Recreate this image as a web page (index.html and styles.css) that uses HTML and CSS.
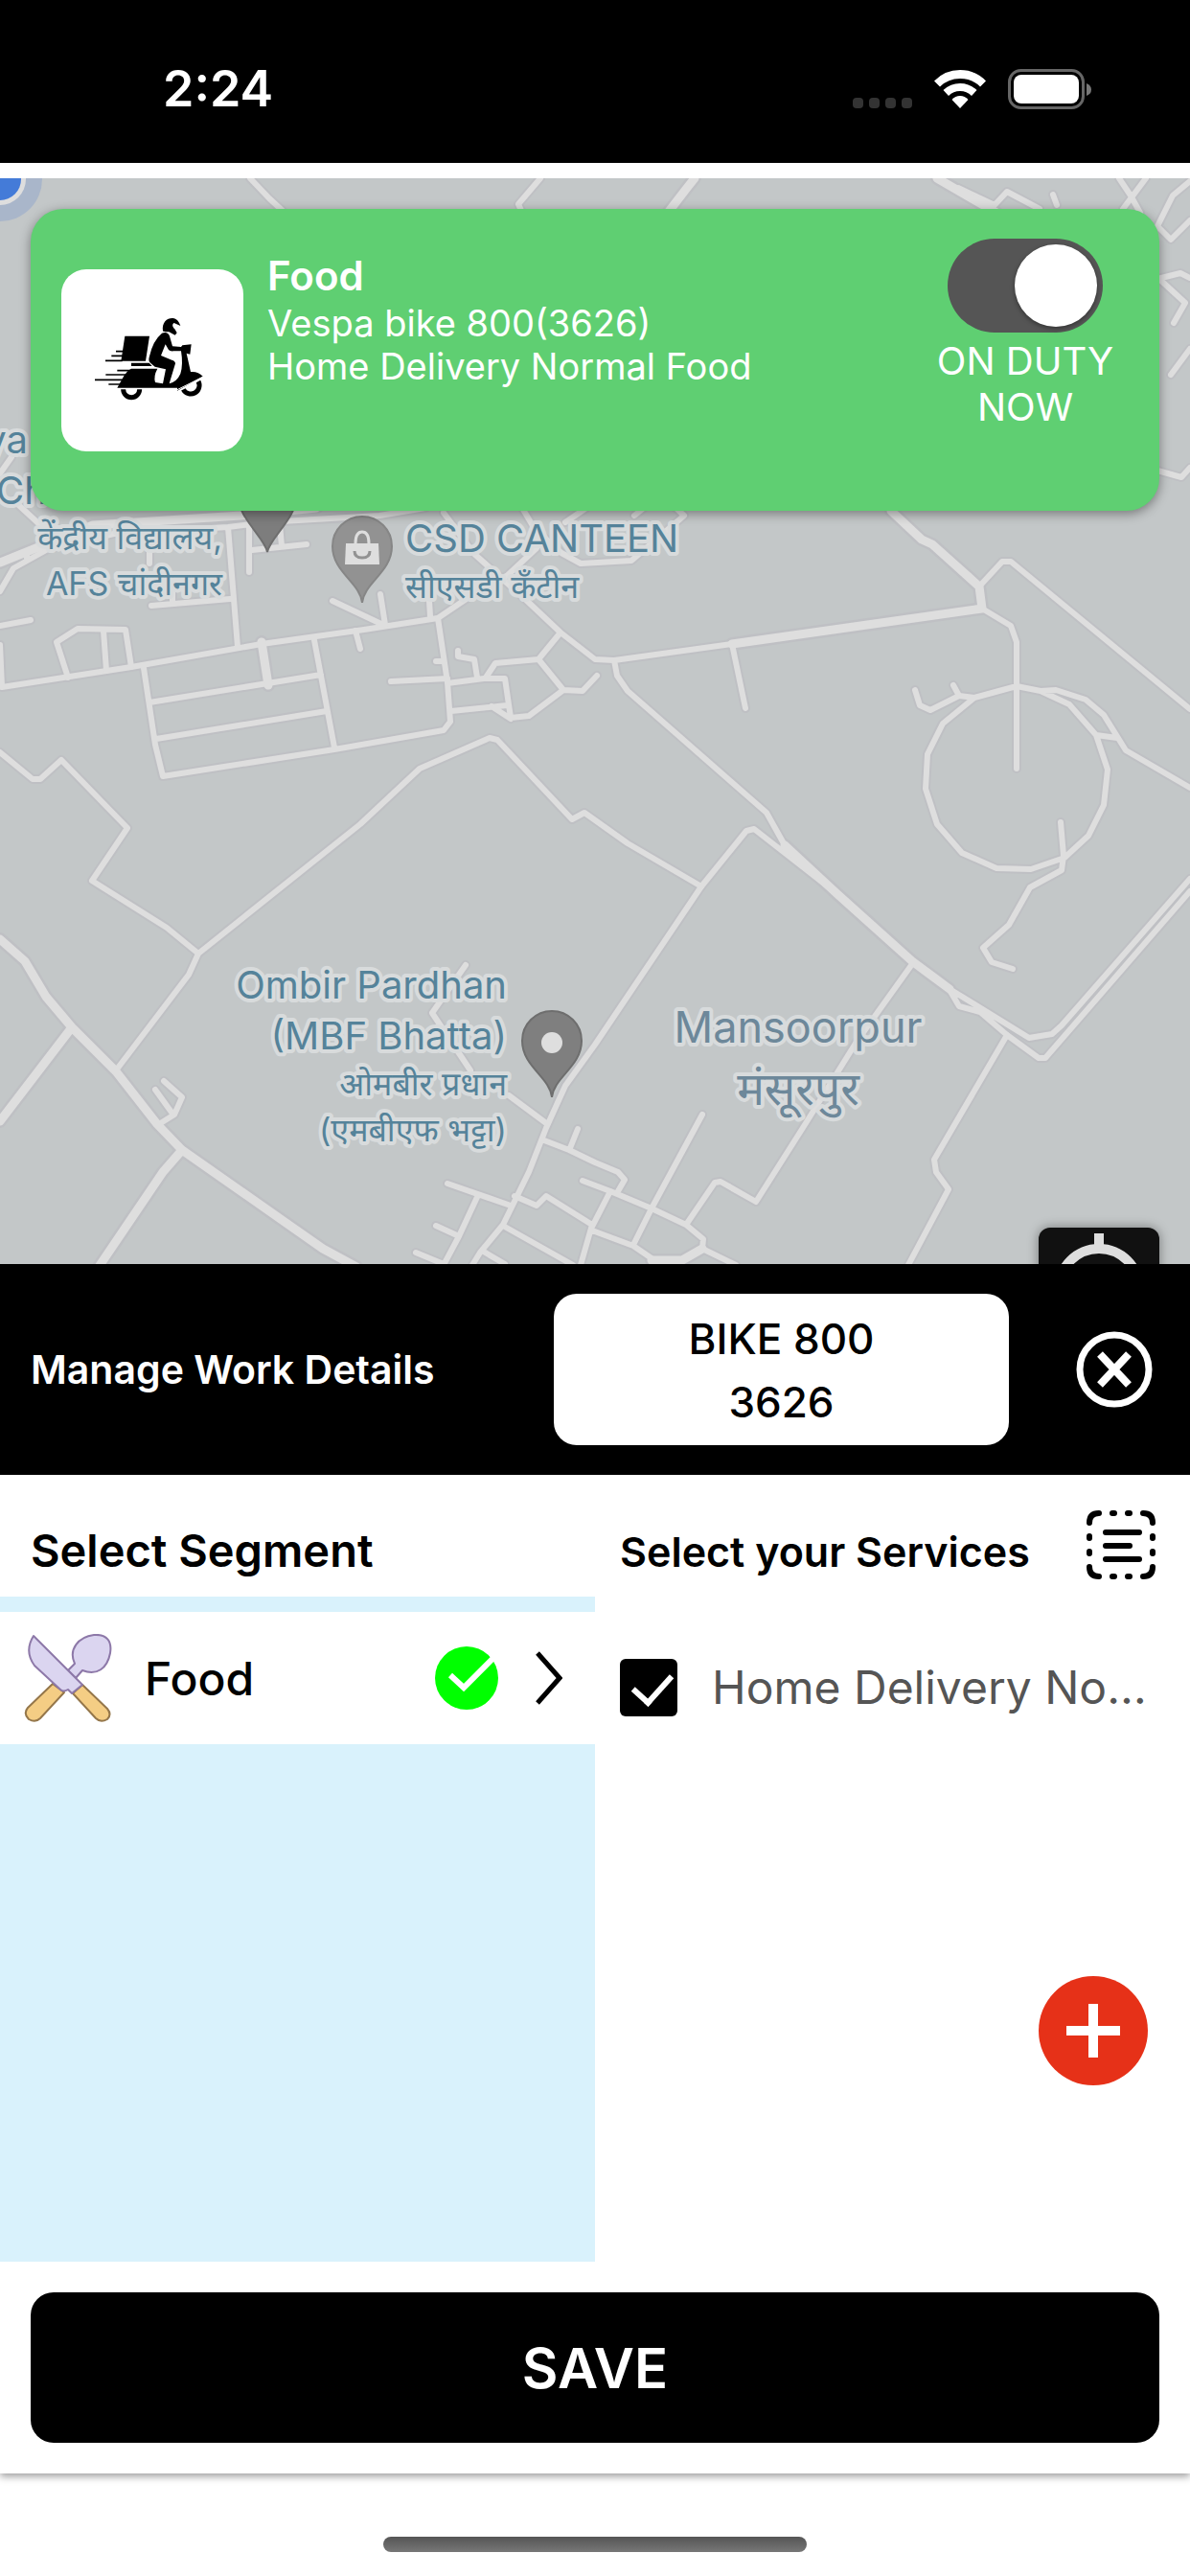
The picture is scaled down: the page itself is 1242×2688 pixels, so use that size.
FILE: index.html
```html
<!DOCTYPE html>
<html lang="en">
<head>
<meta charset="utf-8">
<meta name="viewport" content="width=device-width, initial-scale=1">
<title>Manage Work Details</title>
<link rel="stylesheet" href="styles.css">
</head>
<body>
<div class="screen">
  <header class="status">
    <span class="status-time">2:24</span>
    <div class="status-icons">
      <svg width="62" height="42" viewBox="0 0 62 42" aria-hidden="true"><g fill="#333"><rect x="0" y="30" width="11" height="11" rx="4"/><rect x="17" y="30" width="11" height="11" rx="4"/><rect x="34" y="30" width="11" height="11" rx="4"/><rect x="51" y="30" width="11" height="11" rx="4"/></g></svg>
      <svg width="54" height="42" viewBox="0 0 54 42" aria-hidden="true"><g fill="#fff"><path d="M0 12.500Q11 1 27 1T54 12.500L48 18.500Q39.500 10 27 10T6 18.500Z"/><path d="M9.500 22Q17 15 27 15T44.500 22L39 28Q34 23 27 23T15 28Z"/><path d="M18.500 32Q22 28 27 28T35.500 32L27 41Z"/></g></svg>
      <svg width="88" height="42" viewBox="0 0 88 42" aria-hidden="true"><rect x="1.500" y="1.500" width="77" height="39" rx="12" fill="none" stroke="#666" stroke-width="3"/><rect x="6" y="6" width="68" height="30" rx="8" fill="#fff"/><path d="M82 15Q87 17 87 21.500T82 28Z" fill="#777"/></svg>
    </div>
  </header>

  <section class="map" aria-label="Map">
    <svg class="map-canvas" viewBox="0 186 1242 1133" preserveAspectRatio="xMidYMin slice">
      <defs>
        <g id="roads">
          <path d="M261 186L281 207L295 220M564 186L541 213L545 222M1000 196L1038 214L1051 200L1085 218M1099 203L1103 214M1168 186L1180 204L1190 222M1196 186L1172 218M1242 189L1224 204L1208 236L1222 250L1242 230M1208 291L1232 285L1242 290M1212 293L1237 316L1225 337M1242 364L1222 391M1208 491L1233 498L1242 488"/>
          <path d="M12 477L0 494M14 522L40 546M0 617L14 593L50 573L119 557L238 550L277 545L396 538L444 530M238 550L248 675M260 550V597M263 574L320 568M292 547L294 570M158 632L240 625M180 627V617M156 560V588M28 577V583M0 653L32 647M0 673L2 717L137 696L273 672L380 657L457 645L491 622L530 600L560 572M586 577L606 588L659 585L714 538L700 525M662 538L672 530M545 530L558 552L586 577M590 545L612 530"/>
          <path d="M71 707L59 670L81 656L131 657L137 696M108 658L111 700M150 697L162 777L170 810L349 782L463 762L470 753L467 712L457 645M328 668L349 780M156 733L335 704M163 771L341 742M371 658L376 677M347 627L400 652M397 620L402 652M448 627L449 643M408 711L467 708M455 690H463M467 713L505 708L527 708L533 749L552 747L588 720L562 688L517 692L507 707M478 679V685L495 688L498 707M471 742L529 736M513 737L533 750M588 720L608 721L623 705M562 688L585 660M463 535L495 578L550 627L585 660L621 688L641 689L764 672"/>
          <path d="M0 785L34 813H42L64 793L133 864L96 919L174 968L207 995L376 860L392 845L438 802L511 770L519 772L597 855L610 848L655 880L732 925M207 995L197 1017L121 1117M166 1173L182 1163L190 1145L171 1128M162 1137L180 1162M486 1007L451 1057L491 1117M531 1143L570 1172"/>
          <path d="M874 933L787 865L779 867L732 925L621 1090L590 1133L570 1177L552 1223L525 1278L501 1307L493 1320M568 1190L594 1200L621 1213L645 1223L652 1231L645 1243M603 1178L595 1198M608 1232L637 1243L680 1261L716 1278L734 1293L733 1303L768 1320M537 1248L560 1258L570 1248L618 1278L606 1320M467 1235L533 1258M499 1247L479 1290L463 1320M455 1279L479 1290M434 1307L463 1319M525 1279L598 1320M503 1305L527 1319M733 1163L680 1261L661 1299M618 1284L661 1300L680 1313M637 1243L618 1280M716 1278L746 1234L752 1233L789 1254L841 1172L894 1087L952 1006M1051 1080L975 1210L977 1223L990 1241L948 1320"/>
          <path d="M641 689L644 705L655 721L800 848L819 882L874 933M764 672L778 739M1022 612L1046 586H1055L1242 740M1025 635L1055 653L1061 670V802M1061 716L1086 721L1116 735L1144 767L1156 803L1152 840L1136 872L1111 895L1076 907L1040 906L1004 890L978 860L966 823L968 787L984 755L1017 728ZM1017 728L1001 726L971 741L960 736L955 720M995 715L1001 726M1086 721L1102 720L1133 730L1152 746L1175 783L1242 822M1144 767L1166 770M1107 858L1110 893L1108 908L1075 926L1053 965L1026 989L1035 1004L1057 1011M991 1032L1074 1083L1098 1079L1108 1070L1242 917M991 1033L1001 1050L1023 1056L1051 1080L1084 1104H1091L1242 930"/>
        </g>
        <g id="wide-roads">
          <path d="M725 186L717 196L697 222M978 186L1040 222M0 587L97 548L251 538L330 530M273 670L280 715M930 533L962 563L973 568L1022 612L1025 635L764 672M0 980L26 1003L48 1040L75 1072L121 1118L164 1173L190 1200L337 1303L372 1322M75 1072L0 1170M190 1200L170 1223L103 1322M819 882L874 933L952 1003L991 1032M680 1315H712L733 1303"/>
        </g>
      </defs>
      <rect y="186" width="1242" height="1133" fill="#c3c7c8"/>
      <g fill="none" stroke-linecap="round" stroke-linejoin="round">
        <g stroke="#bfc0c4"><use href="#roads" stroke-width="10"/><use href="#wide-roads" stroke-width="14"/></g>
        <g stroke="#dedede"><use href="#roads" stroke-width="6"/><use href="#wide-roads" stroke-width="9"/></g>
      </g>
      <circle cx="0" cy="187" r="44" fill="#a9b6ca"/>
      <circle cx="0" cy="187" r="27" fill="#dedede"/>
      <circle cx="0" cy="187" r="22" fill="#447bd8"/>
      <g stroke-width="2">
        <path d="M279 576C277 562 248 540 248 516A31 31 0 0 1 310 516C310 540 281 562 279 576Z" fill="#7d7d7d" stroke="#6e6e6e"/>
        <path d="M378 629C376 608 347 597 347 570A31 31 0 0 1 409 570C409 597 380 608 378 629Z" fill="#929292" stroke="#868686"/>
        <path d="M576 1145C574 1124 545 1113 545 1086A31 31 0 0 1 607 1086C607 1113 578 1124 576 1145Z" fill="#7f7f7f" stroke="#6e6e6e"/>
      </g>
      <circle cx="576" cy="1088" r="11" fill="#dedede"/>
      <path d="M361 567H395L396 589H360Z" fill="#dedede"/>
      <path d="M371 567Q371 555 378 555T385 567" fill="none" stroke="#dedede" stroke-width="3"/>
      <path d="M370 575Q370 582 378 582T386 575" fill="none" stroke="#929292" stroke-width="3"/>
      <g class="place">
        <text x="29" y="473" text-anchor="end">ya</text>
        <text x="-4" y="526">Ch</text>
        <text x="423" y="576">CSD CANTEEN</text>
        <text x="529" y="1042" text-anchor="end">Ombir Pardhan</text>
        <text x="529" y="1095" text-anchor="end">(MBF Bhatta)</text>
      </g>
      <g class="place place-local" lang="hi">
        <text x="232" y="573" text-anchor="end">केंद्रीय विद्यालय,</text>
        <text x="232" y="621" text-anchor="end">AFS चांदीनगर</text>
        <text x="423" y="624">सीएसडी कँटीन</text>
        <text x="529" y="1143" text-anchor="end">ओमबीर प्रधान</text>
        <text x="529" y="1191" text-anchor="end">(एमबीएफ भट्टा)</text>
      </g>
      <g class="town" text-anchor="middle">
        <text x="833" y="1088">Mansoorpur</text>
        <text class="town-local" x="833" y="1153" lang="hi">मंसूरपुर</text>
      </g>
    </svg>

    <article class="duty">
      <div class="duty-icon">
        <svg viewBox="9 31 570 570" aria-hidden="true">
          <path d="M327 224C323 196 341 183 358 184C370 185 377 194 382 208L362 199C355 203 357 211 364 218L371 230L365 237L346 227C338 225 332 229 327 224Z"/>
          <path d="M324 231Q342 225 348 240L357 272L384 274L388 269L416 266L412 297L401 294L414 352Q438 350 452 366L372 411V402H184L200 374Q213 348 228 342H310Q297 366 303 385L327 389L336 344L302 336L288 324Q280 318 285 303Q296 254 324 231Z"/>
          <path d="M335 266L345 283Q349 288 360 287H384Q391 330 382 358Q371 383 347 389L366 326Q366 318 355 315L321 301Z" fill="#fff"/>
          <path d="M208 240H285L273 318H196ZM228 324H284L293 334H228Z"/>
          <g fill="none" stroke="#000" stroke-width="5"><path d="M180 288H205M166 302H202M147 317H200M184 348H228M148 361H215M114 377H206M157 391H200"/></g>
          <g fill="none" stroke="#000" stroke-width="15"><path d="M203 407A25 25 0 0 0 254 407M391 407A26 26 0 1 0 438 382"/></g>
          <path d="M372 408L452 368" stroke="#fff" stroke-width="3" fill="none"/>
        </svg>
      </div>
      <div class="duty-text">
        <h2>Food</h2>
        <p>Vespa bike 800(3626)</p>
        <p>Home Delivery Normal Food</p>
      </div>
      <label class="duty-switch">
        <input type="checkbox" role="switch" checked>
        <span>ON DUTY NOW</span>
      </label>
    </article>

    <button class="locate" type="button" aria-label="Center on my location">
      <svg viewBox="0 0 126 126" aria-hidden="true"><g fill="none" stroke="#dedede" stroke-width="10"><circle cx="63" cy="64" r="42"/><path d="M63 6V22M63 106V122M5 64H21M105 64H121"/></g><circle cx="63" cy="64" r="18" fill="#dedede"/></svg>
    </button>
  </section>

  <main class="panel">
    <div class="panel-head">
      <h1>Manage Work Details</h1>
      <button class="vehicle" type="button"><span>BIKE 800</span><span>3626</span></button>
      <button class="close" type="button" aria-label="Close">
        <svg viewBox="0 0 80 80" aria-hidden="true"><g fill="none" stroke="#fff"><circle cx="40" cy="40" r="36" stroke-width="7"/><path d="M25 24L55 56M55 24L25 56" stroke-width="8"/></g></svg>
      </button>
    </div>

    <div class="columns">
      <section class="segments">
        <h2>Select Segment</h2>
        <a class="segment" href="#food">
          <svg class="segment-icon" viewBox="0 0 92 92" aria-hidden="true">
            <g stroke-width="2" stroke-linejoin="round">
              <path d="M53 31C46 16 57 3 73 1C87 0 92 8 90 20C87 36 76 44 61 38L54 46L46 38Z" fill="#dbd5f0" stroke="#8d78a8"/>
              <path d="M30 52L42 61L17 88Q12 93 5 89Q-1 83 4 77Z" fill="#f4cd84" stroke="#94764a"/>
              <path d="M51 62L61 53L87 78Q92 84 87 89Q80 93 75 88Z" fill="#f4cd84" stroke="#94764a"/>
              <path d="M10 2L61 53L50 62L46 58Q41 61 38 58L11 33Q0 18 10 2Z" fill="#dbd5f0" stroke="#8d78a8"/>
            </g>
          </svg>
          <span class="segment-name">Food</span>
          <svg class="segment-check" viewBox="0 0 66 66" aria-hidden="true"><circle cx="33" cy="33" r="33" fill="#0f0"/><path d="M16 30L30 43L62 11" fill="none" stroke="#fff" stroke-width="6"/></svg>
          <svg class="segment-arrow" viewBox="0 0 28 56" aria-hidden="true"><path d="M2 2L25 28L2 54" fill="none" stroke="#000" stroke-width="5"/></svg>
        </a>
      </section>

      <section class="services">
        <div class="services-head">
          <h2>Select your Services</h2>
          <button class="select-all" type="button" aria-label="Select all">
            <svg viewBox="0 0 72 72" aria-hidden="true"><g fill="none" stroke="#000" stroke-width="6" stroke-linecap="round"><path d="M3 13Q3 3 13 3M59 3Q69 3 69 13M69 59Q69 69 59 69M13 69Q3 69 3 59"/><path d="M20 23H55M20 37H45M20 51H55"/><path d="M27 3H29M43 3H45M27 69H29M43 69H45M3 27V29M3 43V45M69 27V29M69 43V45"/></g></svg>
          </button>
        </div>
        <label class="service">
          <input type="checkbox" checked>
          <span>Home Delivery Normal Food</span>
        </label>
        <button class="add" type="button" aria-label="Add service">
          <svg viewBox="0 0 114 114" aria-hidden="true"><path d="M57 29V85M29 57H85" fill="none" stroke="#fff" stroke-width="10"/></svg>
        </button>
      </section>
    </div>

    <div class="panel-foot"><button class="save" type="button">SAVE</button></div>
  </main>

  <footer class="home"><div class="home-bar"></div></footer>
</div>
</body>
</html>
```

FILE: styles.css
```css
* {
  box-sizing: border-box;
}

body {
  margin: 0;
  background: #fff;
  color: #000;
  font-family: Inter, "Noto Sans", sans-serif;
}

h1,
h2,
p {
  margin: 0;
  font-weight: 400;
}

button {
  margin: 0;
  padding: 0;
  border: 0;
  background: none;
  color: inherit;
  font: inherit;
}

svg {
  display: block;
}

.screen {
  display: flex;
  flex-direction: column;
  min-height: 100vh;
}

/* Status bar */
.status {
  display: flex;
  align-items: center;
  justify-content: space-between;
  padding: 61px 102px 45px 170px;
  background: #000;
  color: #fff;
}

.status-time {
  font-size: 52px;
  font-weight: 600;
  line-height: 64px;
}

.status-icons {
  display: flex;
  gap: 23px;
}

/* Map with the duty card on top */
.map {
  position: relative;
  flex: 1 0 auto;
  min-height: 1133px;
  margin-top: 16px;
  padding: 32px;
  overflow: hidden;
}

.map-canvas {
  position: absolute;
  inset: 0;
  width: 100%;
  height: 100%;
}

.place,
.town {
  fill: #55839a;
  font-size: 40px;
  paint-order: stroke;
  stroke: #d8dbdc;
  stroke-width: 8px;
  stroke-linejoin: round;
}

.place-local {
  font-size: 34px;
}

.town {
  fill: #6d889a;
  font-size: 45px;
}

.town-local {
  font-size: 48px;
}

.duty {
  position: relative;
  display: flex;
  align-items: flex-start;
  min-height: 315px;
  padding: 31px 32px;
  border-radius: 34px;
  background: #5fcf72;
  box-shadow: 0 3px 12px rgba(0, 0, 0, 0.4);
  color: #fff;
}

.duty-icon {
  width: 190px;
  margin-top: 32px;
  border-radius: 26px;
  background: #fff;
}

.duty-text {
  flex: 1;
  padding: 12px 0 0 25px;
  font-size: 38px;
  font-weight: 500;
  line-height: 45px;
}

.duty-text h2 {
  font-size: 42px;
  font-weight: 600;
  line-height: 54px;
}

.duty-switch {
  display: flex;
  flex-direction: column;
  align-items: center;
  gap: 6px;
  width: 216px;
  font-size: 40px;
  line-height: 48px;
  text-align: center;
}

.duty-switch input {
  display: flex;
  justify-content: flex-end;
  width: 162px;
  height: 98px;
  margin: 0;
  padding: 6px;
  border-radius: 49px;
  background: #555;
  appearance: none;
}

.duty-switch input::before {
  width: 86px;
  height: 86px;
  border-radius: 50%;
  background: #fff;
  box-shadow: 0 2px 5px rgba(0, 0, 0, 0.4);
  content: "";
}

.duty-switch input:not(:checked) {
  justify-content: flex-start;
}

.locate {
  position: absolute;
  right: 32px;
  bottom: -88px;
  width: 126px;
  height: 126px;
  border-radius: 12px;
  background: #111;
  box-shadow: 0 0 12px rgba(0, 0, 0, 0.4);
}

/* Work details panel */
.panel {
  background: #fff;
  box-shadow: 0 3px 8px rgba(0, 0, 0, 0.4);
}

.panel-head {
  display: flex;
  align-items: center;
  padding: 31px 39px 31px 32px;
  background: #000;
}

.panel-head h1 {
  flex: 1;
  color: #fff;
  font-size: 41px;
  font-weight: 600;
}

.vehicle {
  display: flex;
  flex-direction: column;
  align-items: center;
  justify-content: center;
  width: 475px;
  height: 158px;
  padding-top: 2px;
  border-radius: 24px;
  background: #fff;
  color: #000;
  font-size: 44px;
  font-weight: 500;
  line-height: 66px;
}

.close {
  width: 80px;
  height: 80px;
  margin-left: 70px;
}

.columns {
  display: grid;
  grid-template-columns: 1fr 1fr;
  min-height: 821px;
}

.segments {
  background: #d9f2fc;
}

.segments h2 {
  padding: 50px 32px 19px;
  background: #fff;
  font-size: 47px;
  font-weight: 600;
  line-height: 58px;
}

.segment {
  display: flex;
  align-items: center;
  height: 138px;
  margin-top: 16px;
  padding: 0 34px 0 25px;
  background: #fff;
  color: #000;
  text-decoration: none;
}

.segment-icon {
  width: 92px;
}

.segment-name {
  flex: 1;
  margin-left: 34px;
  font-size: 48px;
  font-weight: 500;
}

.segment-check {
  width: 66px;
  margin-right: 39px;
}

.segment-arrow {
  width: 28px;
}

.services {
  display: flex;
  flex-direction: column;
  min-width: 0;
  padding: 37px 36px 184px 26px;
}

.services-head {
  display: flex;
  align-items: flex-start;
  justify-content: space-between;
}

.services-head h2 {
  padding-top: 16px;
  font-size: 43px;
  font-weight: 600;
  line-height: 54px;
}

.select-all {
  width: 72px;
}

.service {
  display: flex;
  align-items: center;
  gap: 36px;
  margin-top: 81px;
  color: #555;
  font-size: 48px;
  line-height: 64px;
}

.service input {
  flex: none;
  width: 60px;
  height: 60px;
  margin: 0;
  border-radius: 6px;
  background: #000;
  appearance: none;
}

.service input:checked::before {
  display: block;
  width: 18px;
  height: 34px;
  margin: 7px 0 0 22px;
  border: solid #fff;
  border-width: 0 6px 6px 0;
  transform: rotate(42deg);
  content: "";
}

.service span {
  overflow: hidden;
  text-overflow: ellipsis;
  white-space: nowrap;
}

.add {
  align-self: flex-end;
  width: 114px;
  height: 114px;
  margin: auto 8px 0 0;
  border-radius: 50%;
  background: #e63118;
}

.panel-foot {
  padding: 32px;
}

.save {
  display: block;
  width: 100%;
  height: 157px;
  border-radius: 24px;
  background: #000;
  color: #fff;
  font-size: 58px;
  font-weight: 600;
}

.home {
  padding: 66px 0 25px;
}

.home-bar {
  width: 442px;
  height: 16px;
  margin: 0 auto;
  border-radius: 8px;
  background: linear-gradient(#555, #777);
}
```
